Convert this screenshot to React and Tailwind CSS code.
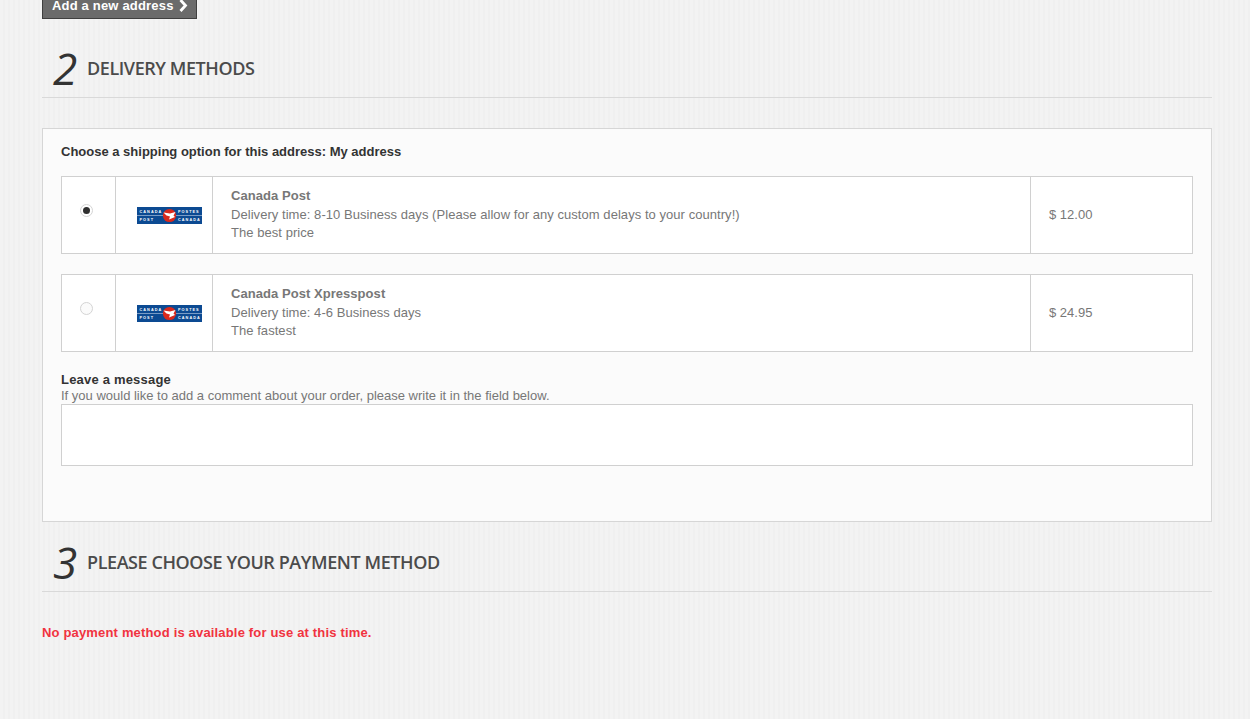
const sans = { fontFamily: '"Liberation Sans", Arial, sans-serif' };

function Logo() {
  return (
    <svg width="65" height="17" viewBox="0 0 65 17" className="block">
      <rect width="65" height="17" fill="#0c4a92" />
      <rect x="0" y="8.2" width="65" height="0.7" fill="#a9bfdb" />
      <circle cx="32.5" cy="8.5" r="6.6" fill="#d9291c" />
      <path d="M26.5 5.5 L33 6.5 L38.5 5 L36.5 8.5 L38 10 L32 12.5 L33 9.5 L29.5 8.5 Z" fill="#ffffff" />
      <g fill="#ffffff" fontFamily="Liberation Sans, sans-serif" fontSize="3.8" fontWeight="700" letterSpacing="1.05">
        <text x="2.5" y="6.2">CANADA</text>
        <text x="2.5" y="14">POST</text>
        <text x="41" y="6.2">POSTES</text>
        <text x="41" y="14">CANADA</text>
      </g>
    </svg>
  );
}

function Heading({ n, title, className }) {
  return (
    <div className={`flex items-center h-[76px] pt-[18px] pl-[11px] border-b border-[#d9d9d9] ${className}`}>
      <span className="w-[34px] text-[44px] leading-none italic text-[#333] -mt-[1px]" style={{ fontFamily: '"Open Sans", sans-serif', fontWeight: 400 }}>{n}</span>
      <span className="text-[18px] font-semibold text-[#4b4b4b] tracking-[-0.42px] uppercase" style={{ fontFamily: '"Open Sans", sans-serif' }}>{title}</span>
    </div>
  );
}

function Option({ checked, name, time, note, price }) {
  return (
    <div className="flex h-[78px] bg-white border border-[#d0d0d0] text-[13px] text-[#777]">
      <div className="w-[54px] shrink-0 border-r border-[#d0d0d0] flex justify-center items-center pr-[5px] pb-[9px]">
        {checked ? (
          <span className="w-[13px] h-[13px] rounded-full border border-[#d4d4d4] bg-white flex items-center justify-center">
            <span className="w-[7px] h-[7px] rounded-full bg-[#2f2f2f]" />
          </span>
        ) : (
          <span className="w-[13px] h-[13px] rounded-full border border-[#d4d4d4] bg-[#fbfbfb]" />
        )}
      </div>
      <div className="w-[97px] shrink-0 border-r border-[#d0d0d0] flex items-center justify-center pl-[21px] pr-[10px]">
        <Logo />
      </div>
      <div className="flex-1 pl-[18px] pt-[10px] leading-[18.5px] tracking-[0.05px]">
        <div className="font-bold">{name}</div>
        <div>{time}</div>
        <div>{note}</div>
      </div>
      <div className="w-[162px] shrink-0 border-l border-[#d0d0d0] pl-[18px] flex items-center">{price}</div>
    </div>
  );
}

export default function App() {
  return (
    <div className="h-[719px] overflow-hidden bg-[#f1f1f1] bg-[repeating-linear-gradient(90deg,#f3f3f3_0px,#f3f3f3_3px,#f0f0f0_3px,#f0f0f0_5px)] pl-[42px] pr-[38px]" style={sans}>
      <div className="h-[19px] w-[155px] bg-[#6b6b6b] border border-[#3f3f3f] border-t-0 flex items-end pl-[9px] pb-[6px] text-white text-[13px] font-bold tracking-[0.18px] leading-none overflow-hidden">
        <span className="flex items-center gap-[4px]">Add a new address
          <svg width="10" height="13" viewBox="0 0 10 13"><path d="M2.5 1 L7.5 6.5 L2.5 12" fill="none" stroke="#fff" strokeWidth="2.8" /></svg>
        </span>
      </div>
      <Heading n="2" title="Delivery methods" className="mt-[3px]" />
      <div className="mt-[30px] h-[394px] bg-[#fbfbfb] border border-[#d6d6d6] px-[18px] pt-[15px]">
        <div className="text-[13px] font-bold text-[#333] leading-[15px]">Choose a shipping option for this address: My address</div>
        <div className="mt-[17px] flex flex-col gap-[20px]">
          <Option checked name="Canada Post" time="Delivery time: 8-10 Business days (Please allow for any custom delays to your country!)" note="The best price" price="$ 12.00" />
          <Option name="Canada Post Xpresspost" time="Delivery time: 4-6 Business days" note="The fastest" price="$ 24.95" />
        </div>
        <div className="mt-[19px] text-[13px] font-bold text-[#333] tracking-[0.2px] leading-[17px]">Leave a message</div>
        <div className="mb-[1px] text-[13px] text-[#777] leading-[15px]">If you would like to add a comment about your order, please write it in the field below.</div>
        <div className="h-[62px] bg-white border border-[#d0d0d0]" />
      </div>
      <Heading n="3" title="Please choose your payment method" className="-mt-[6px]" />
      <div className="mt-[33px] text-[13px] font-bold text-[#f13340] tracking-[0.17px] leading-[15px]">No payment method is available for use at this time.</div>
    </div>
  );
}
